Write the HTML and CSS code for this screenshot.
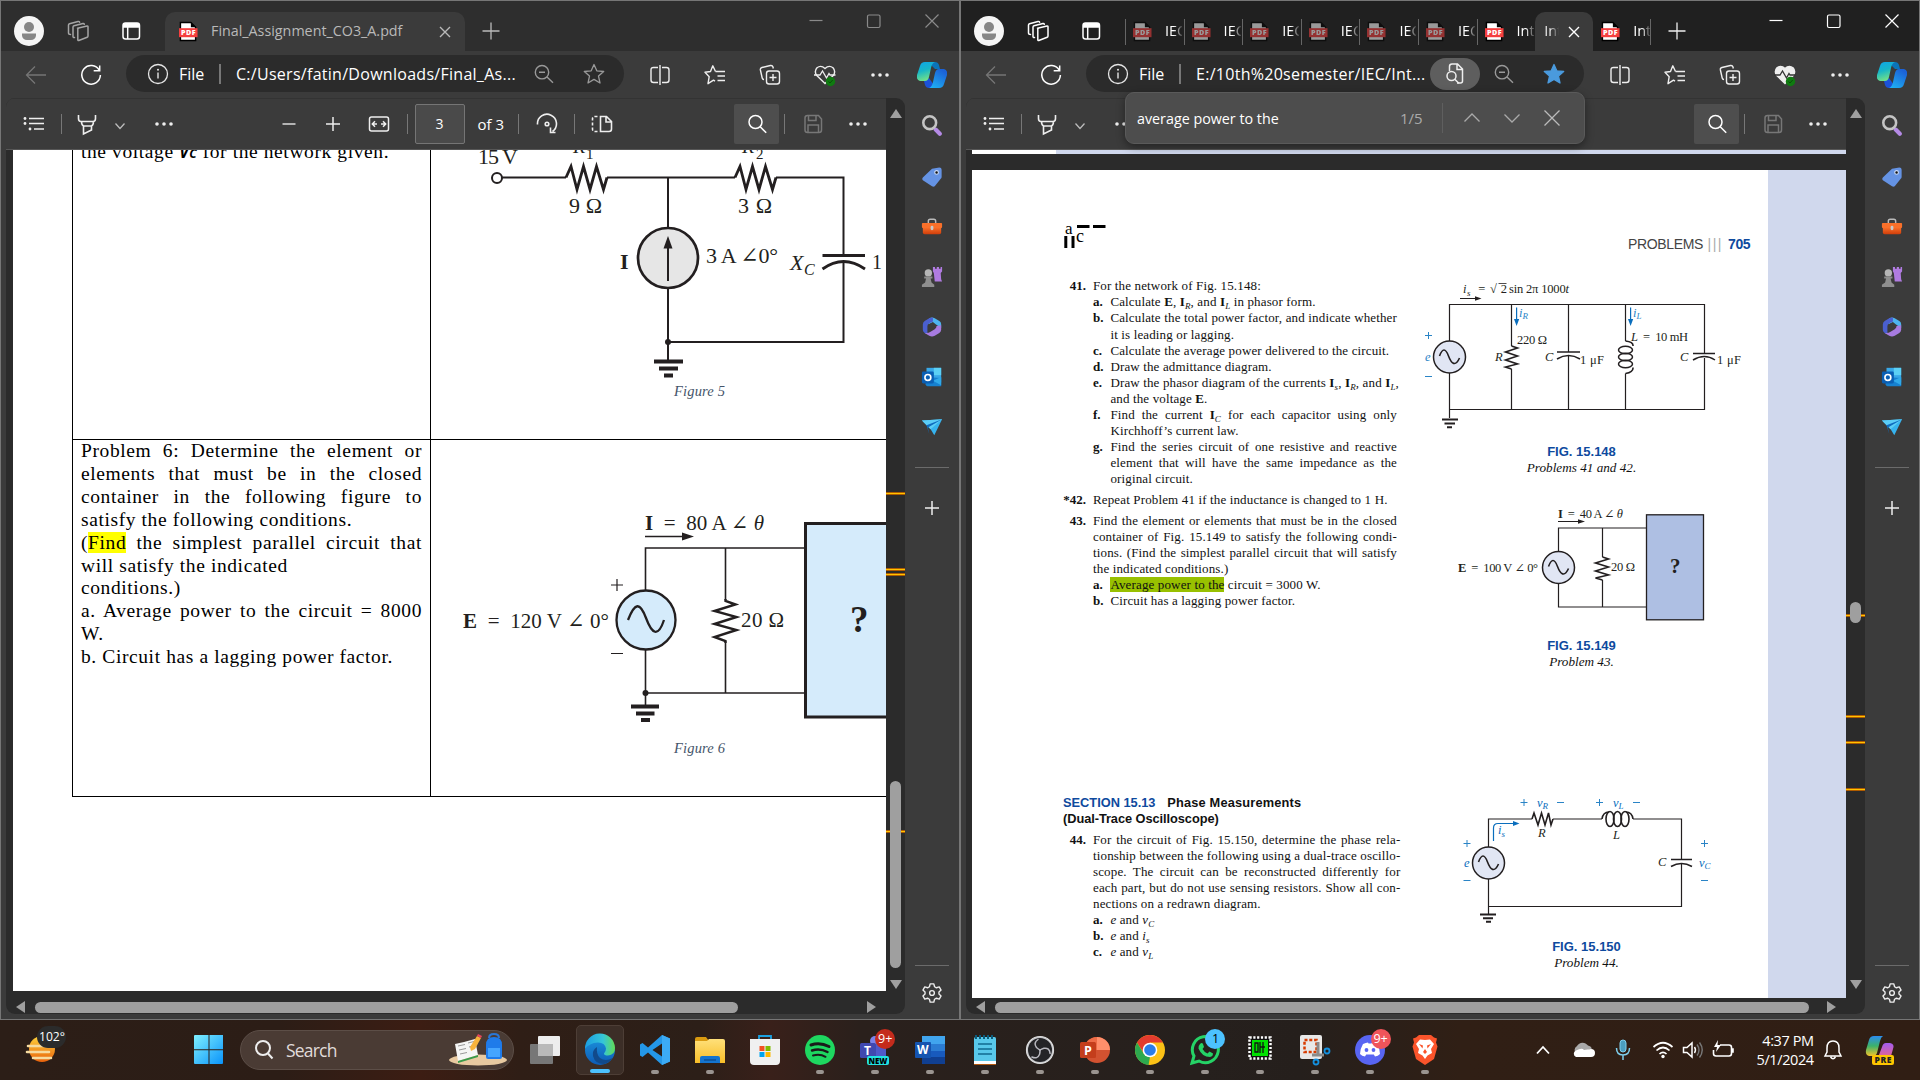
FILE: index.html
```html
<!DOCTYPE html>
<html lang="en">
<head>
<meta charset="utf-8">
<title>Desktop</title>
<link rel="stylesheet" href="styles.css">
</head>
<body>
<svg class="defs" width="0" height="0">
<defs>
<linearGradient id="gCop1" x1="0" y1="0" x2="0.3" y2="1"><stop offset="0" stop-color="#0fa5e9"/><stop offset=".5" stop-color="#17b5c8"/><stop offset="1" stop-color="#6fe08a"/></linearGradient>
<linearGradient id="gCop2" x1="0.6" y1="0" x2="0" y2="1"><stop offset="0" stop-color="#1b62d8"/><stop offset="1" stop-color="#1fb6f5"/></linearGradient>
<linearGradient id="gWin" x1="0" y1="0" x2="1" y2="1"><stop offset="0" stop-color="#7ff0ff"/><stop offset="1" stop-color="#0a93fa"/></linearGradient>
<linearGradient id="gSun" x1="0" y1="0" x2="0" y2="1"><stop offset="0" stop-color="#ffd23c"/><stop offset="1" stop-color="#e8620c"/></linearGradient>
<linearGradient id="gEdge1" x1="0" y1="0" x2="1" y2="0"><stop offset="0" stop-color="#1b9de2"/><stop offset=".6" stop-color="#35c6d8"/><stop offset="1" stop-color="#62dd55"/></linearGradient>
<linearGradient id="gEdge2" x1="0" y1="0" x2="0" y2="1"><stop offset="0" stop-color="#1d97e0"/><stop offset="1" stop-color="#0d5bb5"/></linearGradient>
<linearGradient id="gFold" x1="0" y1="0" x2="0" y2="1"><stop offset="0" stop-color="#ffe07a"/><stop offset="1" stop-color="#f8be28"/></linearGradient>
<linearGradient id="gBox" x1="0" y1="0" x2="0" y2="1"><stop offset="0" stop-color="#f9702a"/><stop offset="1" stop-color="#cf3d0a"/></linearGradient>
<linearGradient id="gPre" x1="0" y1="0" x2="0" y2="1"><stop offset="0" stop-color="#2c8cf0"/><stop offset=".5" stop-color="#3cb26a"/><stop offset="1" stop-color="#f2c32a"/></linearGradient>
<linearGradient id="gPre2" x1="0" y1="0" x2="0" y2="1"><stop offset="0" stop-color="#a45cf0"/><stop offset="1" stop-color="#f0667a"/></linearGradient>
</defs>
<symbol id="i-avatar" viewBox="0 0 30 30"><circle cx="15" cy="15" r="15" fill="#f5f5f5"/><circle cx="15" cy="11" r="5" fill="#868686"/><path d="M8 17.500h14v2a5 4.600 0 0 1-5 4.500h-4a5 4.600 0 0 1-5-4.500z" fill="#868686"/></symbol>
<symbol id="i-work" viewBox="0 0 24 24"><g fill="none" stroke="currentColor" stroke-width="1.500" stroke-linejoin="round" stroke-linecap="round"><path d="M11.500 9.300l9.500-2.300q1-.2 1 .8v9.200q0 1-.8 1.300l-8.400 3.200q-1 .3-1-.7v-10.500q0-.8.700-1z"/><path d="M8.500 18.500q-1.500.2-1.500-1V8q0-1 1-1.300l9-2.200q1.200-.1 1.300.8"/><path d="M4.500 15.500q-2 0-2-1.200V6q0-1 1-1.300l8.500-2.200q1.500-.3 1.600.8"/></g></symbol>
<symbol id="i-tabact" viewBox="0 0 24 24"><rect x="4" y="4" width="16.500" height="16" rx="2.500" fill="none" stroke="#fff" stroke-width="1.500"/><path d="M4 7q0-3 3-3h10.500q3 0 3 3v1.700H4z" fill="#fff"/><path d="M8.700 8v12" stroke="#fff" stroke-width="1.500"/></symbol>
<symbol id="i-pdf" viewBox="0 0 20 22"><path d="M1.500 1.500h11l5 5v14h-16z" fill="#fff" stroke="#000" stroke-width="1.500"/><path d="M12.500 1v5.500h5.500z" fill="#000"/><rect x="0" y="7.500" width="19.500" height="9.500" fill="#f53f3f"/><text x="2" y="15" font-family="Open Sans" font-weight="800" font-size="7.500" textLength="15.500" fill="#fff">PDF</text></symbol>
<symbol id="i-x" viewBox="0 0 24 24"><path d="M7 7l10 10M17 7L7 17" stroke="currentColor" stroke-width="1.400" fill="none"/></symbol>
<symbol id="i-plus" viewBox="0 0 24 24"><path d="M12 3.500v17M3.500 12h17" stroke="currentColor" stroke-width="1.300" fill="none"/></symbol>
<symbol id="i-min" viewBox="0 0 24 24"><path d="M5.500 11.500h13" stroke="currentColor" stroke-width="1.200"/></symbol>
<symbol id="i-max" viewBox="0 0 24 24"><rect x="5.500" y="6" width="12.500" height="12.500" rx="1.500" stroke="currentColor" stroke-width="1.200" fill="none"/></symbol>
<symbol id="i-wx" viewBox="0 0 24 24"><path d="M5.500 5.500l13 13M18.500 5.500l-13 13" stroke="currentColor" stroke-width="1.200"/></symbol>
<symbol id="i-back" viewBox="0 0 24 24"><path d="M22 12H2.500M11 3.500L2.500 12l8.500 8.500" fill="none" stroke="#757575" stroke-width="1.300"/></symbol>
<symbol id="i-ref" viewBox="0 0 24 24"><path d="M20.200 7.200A9.300 9.300 0 1 0 21.400 12M20.700 2.500v5.200h-6" fill="none" stroke="#fff" stroke-width="1.500"/></symbol>
<symbol id="i-info" viewBox="0 0 24 24"><circle cx="12" cy="12" r="9.500" fill="none" stroke="#e6e6e6" stroke-width="1.300"/><path d="M12 10.500v6" stroke="#e6e6e6" stroke-width="1.400"/><circle cx="12" cy="7.700" r="1" fill="#e6e6e6"/></symbol>
<symbol id="i-zoomout" viewBox="0 0 24 24"><g fill="none" stroke="#999" stroke-width="1.400"><circle cx="10" cy="10.200" r="6.700"/><path d="M7 10.200h6M15 15l6 5.800"/></g></symbol>
<symbol id="i-star" viewBox="0 0 24 24"><path d="M12 2.500l2.800 6.300 6.900.7-5.200 4.600 1.500 6.900-6-3.600-6 3.600 1.500-6.900-5.200-4.600 6.900-.7z" stroke="currentColor" stroke-width="1.300" stroke-linejoin="round"/></symbol>
<symbol id="i-split" viewBox="0 0 24 24"><g fill="none" stroke="#eee" stroke-width="1.400"><path d="M10 4.500H5.500q-2.500 0-2.500 2.500v10q0 2.500 2.500 2.500H10M14 4.500h4.500q2.500 0 2.500 2.500v10q0 2.500-2.500 2.500H14M12 2v20"/></g></symbol>
<symbol id="i-favs" viewBox="0 0 24 24"><g fill="none" stroke="#eee" stroke-width="1.400" stroke-linejoin="round"><path d="M12.500 8.500H22M14.500 13H22M14.500 17.500H22"/><path d="M12.500 8.500L9.800 2.800 7.500 8.500l-5.500.8 4.200 4.400-1.200 7 5.500-3.500 1.500 1"/></g></symbol>
<symbol id="i-coll" viewBox="0 0 24 24"><g fill="none" stroke="#eee" stroke-width="1.400" stroke-linejoin="round"><rect x="8.500" y="8" width="13" height="13" rx="2.500"/><path d="M15 11v7M11.500 14.500h7M6 16.500q-1.500 0-1.800-1.500L2.400 7q-.4-2 1.500-2.500l8.500-2q2-.4 2.600 1.500l.3 1.500"/></g></symbol>
<symbol id="i-heart" viewBox="0 0 24 24"><path d="M12 20.500L3.800 12.500q-3-4 .2-7.700 4-3.200 8 .8 4-4 8-.8 3.200 3.700.2 7.700z" fill="var(--heart,none)" stroke="#eee" stroke-width="1.400"/><path d="M1 12h6l2.500-4 4 7 2.500-4.500 1 1.500h5.500" fill="none" stroke="var(--pulse,#eee)" stroke-width="1.300"/><circle cx="17.500" cy="18.500" r="4.700" fill="#0f7b10"/><path d="M15.500 18.500l1.500 1.500 2.700-3" fill="none" stroke="#0a4d0a"/></symbol>
<symbol id="i-dots" viewBox="0 0 24 24"><g fill="#eee"><circle cx="5" cy="12" r="1.800"/><circle cx="12" cy="12" r="1.800"/><circle cx="19" cy="12" r="1.800"/></g></symbol>
<symbol id="i-copilot" viewBox="0 0 30 28"><path d="M11 1h7q3 0 4 3l1 4h-5z" fill="#0b74b8"/><path d="M19 27h-7q-3 0-4-3l-1-4 5-3z" fill="#1b52d8"/><path d="M8 1h10q-3 1-4 6l-2 9q-1 4-4 4H3q-4-1-3-6L3 5q1-4 5-4z" fill="url(#gCop1)"/><path d="M22 27H12q3-1 4-6l2-9q1-4 4-4h5q4 1 3 6l-3 9q-1 4-5 4z" fill="url(#gCop2)"/></symbol>
<symbol id="i-toc" viewBox="0 0 24 24"><g fill="#eee"><circle cx="3" cy="6.500" r="1.400"/><circle cx="3" cy="11.500" r="1.400"/><circle cx="8" cy="17" r="1.400"/></g><path d="M7 6.500h15M7 11.500h15M12 17h10" stroke="#eee" stroke-width="1.500"/></symbol>
<symbol id="i-hl" viewBox="0 0 24 24"><path d="M3.500 3v3.500q0 3 2.500 3h12q2.500 0 2.500-3V3M6.500 9.500q0 3.500 2 4.500v8l8-4v-4q2-1 2-4.500M8.500 14h8" fill="none" stroke="#eee" stroke-width="1.600"/></symbol>
<symbol id="i-chev" viewBox="0 0 24 24"><path d="M7.500 11.500l4.500 5 4.500-5" fill="none" stroke="#bbb" stroke-width="1.300"/></symbol>
<symbol id="i-minus" viewBox="0 0 24 24"><path d="M5.500 12h13" stroke="#ddd" stroke-width="1.600"/></symbol>
<symbol id="i-plus2" viewBox="0 0 24 24"><path d="M12 5v14M5 12h14" stroke="#eee" stroke-width="1.500"/></symbol>
<symbol id="i-fit" viewBox="0 0 24 24"><g fill="none" stroke="#eee" stroke-width="1.500"><rect x="2.500" y="5" width="19" height="14" rx="2"/><path d="M5.500 12H10M8 9.300L5.300 12 8 14.700M18.500 12H14M16 9.300l2.700 2.700L16 14.700"/></g></symbol>
<symbol id="i-rot" viewBox="0 0 24 24"><g fill="none" stroke="#eee" stroke-width="1.600"><path d="M2.500 12.500A9.500 9.500 0 1 1 17.500 19.500M15.500 15.500v5h5"/><circle cx="12" cy="12" r="1.800"/></g></symbol>
<symbol id="i-pv" viewBox="0 0 24 24"><g fill="none" stroke="#eee" stroke-width="1.600"><path d="M10.500 4.500h6l5 5v7.500q0 2.500-2.500 2.500h-8.500zM16 4.500V10h5.500"/><path d="M7.500 4.500H5q-2.500 0-2.500 2.500v10q0 2.500 2.500 2.500h2.500" stroke-dasharray="3 2"/></g></symbol>
<symbol id="i-search" viewBox="0 0 24 24"><g fill="none" stroke="#fff" stroke-width="1.500"><circle cx="10.500" cy="10" r="6.500"/><path d="M15.200 14.800l6 6"/></g></symbol>
<symbol id="i-save" viewBox="0 0 24 24"><g fill="none" stroke="#777" stroke-width="1.500"><path d="M4 6q0-2.500 2.500-2.500h11L20.500 7v11q0 2.500-2.500 2.500H6.500Q4 20.500 4 18z"/><path d="M7.500 3.500v5h7.500v-5M7 20v-7h10.500v7"/></g></symbol>
<symbol id="i-find" viewBox="0 0 24 24"><g fill="none" stroke="#eee" stroke-width="1.500"><path d="M6.500 9V4.500Q6.500 2 9 2h5.500l5 5v12q0 2-2 2H14M14 2v5.500h5.500"/><circle cx="8.500" cy="14" r="4.500"/><path d="M11.800 17.300l4 4"/></g></symbol>
<symbol id="i-up" viewBox="0 0 24 24"><path d="M4.500 15.500l7.500-7.500 7.500 7.500" fill="none" stroke="#aaa" stroke-width="1.300"/></symbol>
<symbol id="i-down" viewBox="0 0 24 24"><path d="M4.500 8.500l7.500 7.500 7.500-7.500" fill="none" stroke="#aaa" stroke-width="1.300"/></symbol>
<symbol id="i-fx" viewBox="0 0 24 24"><path d="M4.500 4.500l15 15M19.500 4.500l-15 15" fill="none" stroke="#bbb" stroke-width="1.300"/></symbol>
<symbol id="s-search" viewBox="0 0 24 24"><path d="M16 17l4.500 4.500" stroke="#b58ae6" stroke-width="4.500" stroke-linecap="round"/><circle cx="9.500" cy="9.500" r="7" fill="none" stroke="#c4c4c4" stroke-width="2.800"/></symbol>
<symbol id="s-tag" viewBox="0 0 24 24"><path d="M12 3l8-1.500q2.500 0 2.500 2.500v8q0 1-1 2l-6.500 8q-1.500 1-3 0l-10-6.500q-1.500-1.500 0-3z" fill="#6593e4"/><circle cx="17" cy="7" r="2" fill="#111" stroke="#cfe0ff" stroke-width="1.200"/></symbol>
<symbol id="s-box" viewBox="0 0 24 24"><path d="M8 8V5.500Q8 3.500 10 3.500h4q2 0 2 2V8" fill="none" stroke="#bbb" stroke-width="1.600"/><rect x="1" y="7.500" width="22" height="5.500" rx="1" fill="#f9702a"/><path d="M2 12.500h20V18q0 2-2 2H4q-2 0-2-2z" fill="url(#gBox)"/><rect x="10.500" y="10.500" width="3" height="5" rx="1.500" fill="#c9c9c9"/></symbol>
<symbol id="s-chess" viewBox="0 0 24 24"><path d="M13 1h2.300v2h1.900V1h2.400v2h1.800V1H23v5l-1.500 1.500.5 7 1 2.500h-8l-1-9.500L13 6z" fill="#b07be0"/><circle cx="8" cy="7.500" r="4" fill="#b5b5b5"/><path d="M3.500 11.500h9v2h-2l1 4.500 3 2.500V23H1v-2.500L4.500 18l1-4.500h-2z" fill="#8e8e8e"/></symbol>
<symbol id="s-365" viewBox="0 0 24 24"><path d="M9 2.500q3-2 6 0l5 3q2 1.200 2 3.500v4l-6-4-3-2.500L8 9z" fill="#4db3ee"/><path d="M9 2.500L4 5.500Q2 7 2 9v6q0 2.200 2 3.500l3 1.500V11q0-2 2-3l4-2V1.500q-2 0-4 1z" fill="#4a5fd0"/><path d="M22 10v5q0 2.200-2 3.500l-5 3q-3 1.800-6 0l-5-3q4 .5 6-1l5-3q2-1.200 2-3.500z" fill="#a77be0"/></symbol>
<symbol id="s-outlook" viewBox="0 0 24 24"><rect x="6" y="2" width="16" height="16" fill="#38a8e8"/><rect x="14" y="2" width="8" height="8" fill="#5bd0f5"/><path d="M5 12l17 1v9H7q-2 0-2-2z" fill="#1681d0"/><path d="M22 12v9l-9-5z" fill="#2fa9ea"/><rect x="1" y="6" width="13" height="13" rx="1.500" fill="#0a5fb4"/><circle cx="7.500" cy="12.500" r="3.200" fill="none" stroke="#fff" stroke-width="1.800"/></symbol>
<symbol id="s-send" viewBox="0 0 24 24"><path d="M1 5l22-1.500L14.500 21l-4-6.500z" fill="#36b3ee"/><path d="M23 3.500L10.500 14.500 1 5z" fill="#5bcdf7"/><path d="M6 10l17-6.500-15.500 9L9 20z" fill="#0f6cbf"/></symbol>
<symbol id="s-gear" viewBox="0 0 24 24"><g fill="none" stroke="#eee" stroke-width="1.500" stroke-linejoin="round"><path d="M10 2h4l.8 3.200 2 1.100 3.100-.9 2 3.400-2.300 2.200v2l2.300 2.200-2 3.400-3.100-.9-2 1.100L14 22h-4l-.8-3.200-2-1.100-3.100.9-2-3.400L4.400 13v-2L2.100 8.800l2-3.400 3.100.9 2-1.100z"/><circle cx="12" cy="12" r="2.600"/></g></symbol>
<symbol id="wave" viewBox="-16 -16 32 32"><path d="M-10-1C-7-9-4-9-1-1S6 10 10 1" fill="none" stroke="#231f20" stroke-width="1.600"/></symbol>
</svg>

<div class="desktop">
<section class="win inactive">
  <header class="tabs">
    <svg class="av"><use href="#i-avatar"/></svg><svg class="ic dim"><use href="#i-work"/></svg><svg class="ic"><use href="#i-tabact"/></svg>
    <div class="tab"><svg class="pdf"><use href="#i-pdf"/></svg><span>Final_Assignment_CO3_A.pdf</span><svg class="ic"><use href="#i-x"/></svg></div>
    <svg class="ic plus"><use href="#i-plus"/></svg>
    <div class="ctl"><svg class="ic"><use href="#i-min"/></svg><svg class="ic"><use href="#i-max"/></svg><svg class="ic"><use href="#i-wx"/></svg></div>
  </header>
  <nav class="addr">
    <svg class="ic"><use href="#i-back"/></svg><svg class="ic"><use href="#i-ref"/></svg>
    <div class="pill"><svg class="ic"><use href="#i-info"/></svg><span class="file">File</span><i class="bar"></i><span class="url">C:/Users/fatin/Downloads/Final_As...</span><b></b><svg class="ic"><use href="#i-zoomout"/></svg><svg class="ic star"><use href="#i-star"/></svg></div>
    <svg class="ic"><use href="#i-split"/></svg><svg class="ic"><use href="#i-favs"/></svg><svg class="ic"><use href="#i-coll"/></svg><svg class="ic"><use href="#i-heart"/></svg><svg class="ic"><use href="#i-dots"/></svg><svg class="cop"><use href="#i-copilot"/></svg>
  </nav>
  <div class="body">
    <div class="viewer">
      <div class="main">
        <div class="tools">
          <svg class="ic"><use href="#i-toc"/></svg><i class="bar"></i><svg class="ic"><use href="#i-hl"/></svg><svg class="ic"><use href="#i-chev"/></svg><svg class="ic"><use href="#i-dots"/></svg><svg class="ic"><use href="#i-minus"/></svg><svg class="ic"><use href="#i-plus2"/></svg><svg class="ic"><use href="#i-fit"/></svg><i class="bar"></i><div class="pageno">3</div><span>of 3</span><i class="bar"></i><svg class="ic"><use href="#i-rot"/></svg><i class="bar"></i><svg class="ic"><use href="#i-pv"/></svg><div class="sbtn"><svg class="ic"><use href="#i-search"/></svg></div><i class="bar"></i><svg class="ic"><use href="#i-save"/></svg><svg class="ic"><use href="#i-dots"/></svg>
        </div>
        <div class="doc">
          <div class="page1">
            <div class="cell c-top"><p><span>the voltage <em class="vc">V<small>C</small></em> for the network given.</span></p></div>
            <div class="cell">
              <svg width="455" height="289" viewBox="431 150 455 289" class="fig">
                <g fill="none" stroke="#231f20" stroke-width="2">
                  <circle cx="497" cy="178" r="5"/>
                  <path d="M502 177.500h64M607 177.500H735M776 177.500h67.500v78M843.500 262v80H668M668 178v50M668 288v72"/>
                  <path d="M566 177.500l5-11 6 23 6.500-23 6.500 23 6.500-23 7 23 3.500-12M735 177.500l5-11 6 23 6.500-23 6.500 23 6.500-23 7 23 3.500-12M822.500 255.500H865M822.500 269q21-15 42.500 0" stroke-width="2.800"/>
                  <circle cx="668" cy="258" r="30" fill="#e6e6e6" stroke-width="2.700"/><path d="M668 281v-34"/>
                  <path d="M654 361.500h29M659 368.500h19M664 375.500h9" stroke-width="4"/>
                </g>
                <path d="M668 236l4.500 12.500h-9z" fill="#231f20"/><circle cx="668" cy="342" r="3" fill="#231f20"/>
                <g fill="#231f20" font-size="22">
                  <text x="478" y="164" textLength="40">15 V</text><text x="573" y="153" font-style="italic" font-size="20">R</text><text x="586" y="159" font-size="15">1</text><text x="742" y="153" font-style="italic" font-size="20">R</text><text x="756" y="159" font-size="15">2</text>
                  <text x="569" y="213" textLength="33">9 Ω</text><text x="738" y="213" textLength="34">3 Ω</text><text x="620" y="269" font-weight="bold">I</text><text x="706" y="263" textLength="72">3 A ∠0°</text><text x="790" y="270" font-style="italic">X</text><text x="804" y="275" font-style="italic" font-size="16">C</text><text x="872" y="269" font-size="20">1</text>
                </g>
                <text x="674" y="396" class="cap" textLength="51">Figure 5</text>
              </svg>
            </div>
            <div class="cell">
              <p><span class="j">Problem 6: Determine the element or</span><span class="j">elements that must be in the closed</span><span class="j">container in the following figure to</span><span>satisfy the following conditions.</span><span class="j">(<mark>Find</mark> the simplest parallel circuit that</span><span>will satisfy the indicated</span><span>conditions.)</span><span class="j">a. Average power to the circuit = 8000</span><span>W.</span><span>b. Circuit has a lagging power factor.</span></p>
            </div>
            <div class="cell">
              <svg width="455" height="355" viewBox="431 440 455 355" class="fig">
                <rect x="805.500" y="523.500" width="120" height="193.500" fill="#d5ebfb" stroke="#231f20" stroke-width="3"/>
                <g fill="none" stroke="#231f20" stroke-width="1.600">
                  <path d="M645 536.500h38M804 548H645.500v145H804M725.500 548v52M725.500 641v52M645.500 693v12"/>
                  <path d="M725.500 599v2l10 3.500-21 6.500 22 6-22 7 22 6-22 7 11 4v2" stroke-width="2.400"/>
                  <circle cx="646" cy="620" r="29.500" fill="#d5ebfb" stroke-width="2.300"/>
                  <path d="M628 620c7-18 12-18 18-2s12 20 18 2" stroke-width="2.300"/>
                  <path d="M631 706.500h28M636 713.500h18.500M641 720h9" stroke-width="4"/>
                  <path d="M611 585h12M617 579v12M611 653.500h12" stroke-width="1.200"/>
                </g>
                <path d="M694 536.500l-12 4v-8z" fill="#231f20"/><circle cx="645.500" cy="693" r="3" fill="#231f20"/>
                <g fill="#231f20" font-size="21">
                  <text x="645" y="530" textLength="119" xml:space="preserve"><tspan font-weight="bold">I</tspan>  =  80 A ∠ <tspan font-style="italic">θ</tspan></text>
                  <text x="463" y="628" textLength="146" xml:space="preserve"><tspan font-weight="bold">E</tspan>  =  120 V ∠ 0°</text>
                  <text x="741" y="627" textLength="43">20 Ω</text><text x="850" y="632" font-size="37" font-weight="bold">?</text>
                </g>
                <text x="674" y="753" class="cap" textLength="51">Figure 6</text>
              </svg>
            </div>
          </div>
        </div>
        <div class="hscroll"><i class="al"></i><i class="thumb"></i><i class="ar"></i></div>
      </div>
      <div class="vscroll"><i class="au"></i><i class="mk" style="top:394px"></i><i class="mk" style="top:470px"></i><i class="mk" style="top:475px"></i><i class="mk" style="top:732px"></i><i class="vt" style="top:683px;height:187px"></i><i class="ad"></i></div>
    </div>
    <aside class="side">
      <svg><use href="#s-search"/></svg><svg><use href="#s-tag"/></svg><svg><use href="#s-box"/></svg><svg><use href="#s-chess"/></svg><svg><use href="#s-365"/></svg><svg><use href="#s-outlook"/></svg><svg><use href="#s-send"/></svg><hr><svg class="sp"><use href="#i-plus2"/></svg><hr class="last"><svg class="gear"><use href="#s-gear"/></svg>
    </aside>
  </div>
</section>

<section class="win active">
  <header class="tabs">
    <svg class="av"><use href="#i-avatar"/></svg><svg class="ic"><use href="#i-work"/></svg><svg class="ic"><use href="#i-tabact"/></svg>
    <div class="strip">
      <div class="mt dimtab"><svg class="pdf"><use href="#i-pdf"/></svg><span>IEC</span></div><div class="mt dimtab"><svg class="pdf"><use href="#i-pdf"/></svg><span>IEC</span></div><div class="mt dimtab"><svg class="pdf"><use href="#i-pdf"/></svg><span>IEC</span></div><div class="mt dimtab"><svg class="pdf"><use href="#i-pdf"/></svg><span>IEC</span></div><div class="mt dimtab"><svg class="pdf"><use href="#i-pdf"/></svg><span>IEC</span></div><div class="mt dimtab"><svg class="pdf"><use href="#i-pdf"/></svg><span>IEC</span></div>
      <div class="mt"><svg class="pdf"><use href="#i-pdf"/></svg><span>Int</span></div>
      <div class="tab"><span>Int</span><svg class="ic"><use href="#i-x"/></svg></div>
      <div class="mt end"><svg class="pdf"><use href="#i-pdf"/></svg><span>Int</span></div>
      <svg class="ic plus"><use href="#i-plus"/></svg>
    </div>
    <div class="ctl"><svg class="ic"><use href="#i-min"/></svg><svg class="ic"><use href="#i-max"/></svg><svg class="ic"><use href="#i-wx"/></svg></div>
  </header>
  <nav class="addr">
    <svg class="ic"><use href="#i-back"/></svg><svg class="ic"><use href="#i-ref"/></svg>
    <div class="pill"><svg class="ic"><use href="#i-info"/></svg><span class="file">File</span><i class="bar"></i><span class="url">E:/10th%20semester/IEC/Int...</span><b class="on"><svg class="ic"><use href="#i-find"/></svg></b><svg class="ic"><use href="#i-zoomout"/></svg><svg class="ic star"><use href="#i-star"/></svg></div>
    <svg class="ic"><use href="#i-split"/></svg><svg class="ic"><use href="#i-favs"/></svg><svg class="ic"><use href="#i-coll"/></svg><svg class="ic"><use href="#i-heart"/></svg><svg class="ic"><use href="#i-dots"/></svg><svg class="cop"><use href="#i-copilot"/></svg>
  </nav>
  <div class="findbar"><span>average power to the</span><span class="cnt">1/5</span><i class="bar"></i><svg class="ic"><use href="#i-up"/></svg><svg class="ic"><use href="#i-down"/></svg><svg class="ic"><use href="#i-fx"/></svg></div>
  <div class="body">
    <div class="viewer">
      <div class="main">
        <div class="tools">
          <svg class="ic"><use href="#i-toc"/></svg><i class="bar"></i><svg class="ic"><use href="#i-hl"/></svg><svg class="ic"><use href="#i-chev"/></svg><svg class="ic"><use href="#i-dots"/></svg><em></em><em></em><em></em><em></em><em></em><em></em><em></em><em></em><em></em><em class="edge"></em><div class="sbtn"><svg class="ic"><use href="#i-search"/></svg></div><i class="bar"></i><svg class="ic"><use href="#i-save"/></svg><svg class="ic"><use href="#i-dots"/></svg>
        </div>
        <div class="doc">
          <div class="prev"></div>
          <div class="page2">
            <div class="txt">
              <svg class="mark" width="44" height="26" viewBox="1062 223 44 26"><path d="M1077 226.500h12.500M1093 226.500h12.500" stroke="#000" stroke-width="3"/><path d="M1065.800 236v12M1073 236v12" stroke="#000" stroke-width="3"/><text x="1065" y="234" font-size="17">a</text><text x="1076" y="242" font-size="18">c</text></svg>
              <div class="q"><b>41.</b><p>For the network of Fig. 15.148:</p></div>
              <div class="a"><b>a.</b><p>Calculate <b>E</b>, <b>I</b><sub>R</sub>, and <b>I</b><sub>L</sub> in phasor form.</p></div>
              <div class="a"><b>b.</b><p><span class="j">Calculate the total power factor, and indicate whether</span><span>it is leading or lagging.</span></p></div>
              <div class="a"><b>c.</b><p>Calculate the average power delivered to the circuit.</p></div>
              <div class="a"><b>d.</b><p>Draw the admittance diagram.</p></div>
              <div class="a"><b>e.</b><p><span class="j">Draw the phasor diagram of the currents <b>I</b><sub>s</sub>, <b>I</b><sub>R</sub>, and <b>I</b><sub>L</sub>,</span><span>and the voltage <b>E</b>.</span></p></div>
              <div class="a"><b>f.</b><p><span class="j">Find the current <b>I</b><sub>C</sub> for each capacitor using only</span><span>Kirchhoff’s current law.</span></p></div>
              <div class="a"><b>g.</b><p><span class="j">Find the series circuit of one resistive and reactive</span><span class="j">element that will have the same impedance as the</span><span>original circuit.</span></p></div>
              <div class="q g4"><b>*42.</b><p>Repeat Problem 41 if the inductance is changed to 1 H.</p></div>
              <div class="q g5"><b>43.</b><p><span class="j">Find the element or elements that must be in the closed</span><span class="j">container of Fig. 15.149 to satisfy the following condi-</span><span class="j">tions. (Find the simplest parallel circuit that will satisfy</span><span>the indicated conditions.)</span></p></div>
              <div class="a"><b>a.</b><p><mark>Average power to the</mark> circuit = 3000 W.</p></div>
              <div class="a"><b>b.</b><p>Circuit has a lagging power factor.</p></div>
              <h3><span>SECTION 15.13</span> Phase Measurements<br><em>(Dual-Trace Oscilloscope)</em></h3>
              <div class="q"><b>44.</b><p><span class="j">For the circuit of Fig. 15.150, determine the phase rela-</span><span class="j">tionship between the following using a dual-trace oscillo-</span><span class="j">scope. The circuit can be reconstructed differently for</span><span class="j">each part, but do not use sensing resistors. Show all con-</span><span>nections on a redrawn diagram.</span></p></div>
              <div class="a s"><b>a.</b><p><i>e</i> and <i>v</i><sub>C</sub></p></div>
              <div class="a s"><b>b.</b><p><i>e</i> and <i>i</i><sub>s</sub></p></div>
              <div class="a s"><b>c.</b><p><i>e</i> and <i>v</i><sub>L</sub></p></div>
            </div>
            <div class="figs">
              <div class="ph">PROBLEMS <span>|||</span><b>705</b></div>
              <svg class="fig" width="368" height="170" viewBox="1400 270 368 170">
                <g fill="none" stroke="#231f20" stroke-width="1.200">
                  <path d="M1460 298.500h16M1449.500 418V304.500h255v49M1704.500 358v51.500h-255M1511.500 304.500V346M1511.500 369v40.500M1568.500 304.500V352M1568.500 356v53.500M1625.500 304.500V341M1625.500 373.500v36"/>
                  <path d="M1511.500 346l6 2-12 4 12 4-12 4 12 4-12 3 6 2M1625.500 341q8 1 7.500 5M1625.500 373.500q8-1 7.500-6" stroke-width="1.600"/>
                  <g stroke-width="1.500"><ellipse cx="1625.500" cy="350" rx="7" ry="3.800"/><ellipse cx="1625.500" cy="357" rx="7" ry="3.800"/><ellipse cx="1625.500" cy="364" rx="7" ry="3.800"/></g>
                  <circle cx="1449.500" cy="357" r="16" fill="#e1e6f4" stroke-width="1.500"/>
                  <path d="M1557 352h23M1557 359q11.500-7 23 0M1693 353.500h22M1693 360q11.500-7 22 0" stroke-width="1.500"/>
                  <path d="M1442 419.500h16M1444.500 423.500h10.500M1447 427.200h5" stroke-width="2"/>
                </g>
                <use href="#wave" x="1433.500" y="341" width="32" height="32"/>
                <path d="M1481.500 298.500l-6.500 2.200v-4.400z" fill="#231f20"/>
                <g fill="#0a6ebd"><path d="M1516 307.500h1.200V319h2l-2.600 7-2.600-7h2zM1630 307.500h1.200V319h2l-2.600 7-2.600-7h2z"/></g>
                <path d="M1425 335.500h7M1428.500 332v7M1425 376.500h7" stroke="#2a84c6" fill="none"/>
                <g fill="#231f20" font-size="12.500">
                  <text x="1463" y="293" font-style="italic">i</text><text x="1467" y="296" font-size="9" font-style="italic">s</text><text x="1475" y="293" xml:space="preserve"> =</text><text x="1490" y="293" textLength="17">√2</text><text x="1509" y="293" textLength="60" xml:space="preserve">sin 2π 1000<tspan font-style="italic">t</tspan></text><path d="M1498.500 283.500h8" stroke="#231f20" stroke-width=".8"/>
                  <text x="1517" y="344" textLength="30">220 Ω</text><text x="1495" y="361" font-style="italic">R</text><text x="1545" y="361" font-style="italic">C</text><text x="1580" y="364" textLength="24">1 μF</text><text x="1631" y="341" textLength="57" xml:space="preserve"><tspan font-style="italic">L</tspan>  =  10 mH</text><text x="1680" y="361" font-style="italic">C</text><text x="1717" y="364" textLength="24">1 μF</text>
                </g>
                <g fill="#2a84c6" font-size="12.500" font-style="italic"><text x="1425" y="361">e</text><text x="1519" y="317">i<tspan font-size="9" dy="2">R</tspan></text><text x="1633" y="317">i<tspan font-size="9" dy="2">L</tspan></text></g>
              </svg>
              <div class="fc"><b>FIG. 15.148</b><i>Problems 41 and 42.</i></div>
              <svg class="fig" width="368" height="135" viewBox="1400 500 368 135">
                <rect x="1646.500" y="514.800" width="57" height="105" fill="#aebfe3" stroke="#231f20" stroke-width="1.300"/>
                <g fill="none" stroke="#231f20" stroke-width="1.200"><path d="M1558 521.500h21M1646 528h-87.500v79h87.500M1602.500 528v29M1602.500 580v27"/><path d="M1602.500 557l6 2-13 4 13 4-13 4 13 4-13 3 7 2" stroke-width="1.600"/><circle cx="1558.500" cy="567.500" r="16" fill="#e1e6f4" stroke-width="1.500"/></g>
                <use href="#wave" x="1542.500" y="551.500" width="32" height="32"/>
                <path d="M1585 521.500l-7 2.200v-4.400z" fill="#231f20"/>
                <g fill="#231f20" font-size="12.500"><text x="1558" y="518" textLength="65" xml:space="preserve"><tspan font-weight="bold">I</tspan>  =  40 A ∠ <tspan font-style="italic">θ</tspan></text><text x="1458" y="572" textLength="80" xml:space="preserve"><tspan font-weight="bold">E</tspan>  =  100 V ∠ 0°</text><text x="1611" y="571" textLength="24">20 Ω</text><text x="1670" y="573" font-size="21" font-weight="bold">?</text></g>
              </svg>
              <div class="fc f2"><b>FIG. 15.149</b><i>Problem 43.</i></div>
              <svg class="fig last" width="368" height="140" viewBox="1400 790 368 140">
                <g fill="none" stroke="#231f20" stroke-width="1.200">
                  <path d="M1488.500 914V819H1532M1553 819h49M1633 819h48.500v40M1681.500 864v42.500h-193"/>
                  <g stroke-width="1.600"><path d="M1532 819l2-6 4 12 3.500-12 3.500 12 3.500-12 2.500 12 2-6M1602 819q1-7 7-7M1633 819q-1-7-7-7"/><ellipse cx="1610" cy="819" rx="4" ry="7.500"/><ellipse cx="1617.500" cy="819" rx="4" ry="7.500"/><ellipse cx="1625" cy="819" rx="4" ry="7.500"/></g>
                  <circle cx="1488.500" cy="863" r="16" fill="#e1e6f4" stroke-width="1.500"/>
                  <path d="M1671 859.500h21M1671 866.500q10.500-6 21 0" stroke-width="1.500"/><path d="M1480 914.500h16M1483 918.200h10M1486 921.800h5" stroke-width="2"/>
                </g>
                <use href="#wave" x="1472.500" y="847" width="32" height="32"/>
                <path d="M1493.500 841v-13q0-4.500 4.500-4.500h16" fill="none" stroke="#0a6ebd" stroke-width="1.200"/><path d="M1519.500 823.500l-6.500 2.400v-4.800z" fill="#0a6ebd"/>
                <path d="M1520.500 802.500h7M1524 799v7M1557 802.500h7M1596 802.500h7M1599.500 799v7M1633 802.500h7M1463.500 843.500h7M1467 840v7M1463.500 880.500h7M1701 843.500h7M1704.500 840v7M1701 880.500h7" stroke="#2a84c6" fill="none"/>
                <g fill="#231f20" font-size="12.500" font-style="italic"><text x="1538" y="837">R</text><text x="1613" y="839">L</text><text x="1658" y="866">C</text></g>
                <g fill="#0a6ebd" font-size="12.500" font-style="italic"><text x="1464" y="867">e</text><text x="1498" y="834">i<tspan font-size="9" dy="3">s</tspan></text><text x="1537" y="807">v<tspan font-size="9" dy="2">R</tspan></text><text x="1613" y="807">v<tspan font-size="9" dy="2">L</tspan></text><text x="1699" y="867">v<tspan font-size="9" dy="2">C</tspan></text></g>
              </svg>
              <div class="fc f3"><b>FIG. 15.150</b><i>Problem 44.</i></div>
            </div>
          </div>
        </div>
        <div class="hscroll"><i class="al"></i><i class="thumb"></i><i class="ar"></i></div>
      </div>
      <div class="vscroll"><i class="au"></i><i class="mk" style="top:516px"></i><i class="mk" style="top:617px"></i><i class="mk" style="top:643px"></i><i class="mk" style="top:690px"></i><i class="vt" style="top:504px;height:21px"></i><i class="ad"></i></div>
    </div>
    <aside class="side">
      <svg><use href="#s-search"/></svg><svg><use href="#s-tag"/></svg><svg><use href="#s-box"/></svg><svg><use href="#s-chess"/></svg><svg><use href="#s-365"/></svg><svg><use href="#s-outlook"/></svg><svg><use href="#s-send"/></svg><hr><svg class="sp"><use href="#i-plus2"/></svg><hr class="last"><svg class="gear"><use href="#s-gear"/></svg>
    </aside>
  </div>
</section>

<footer class="taskbar">
  <div class="weather"><svg width="44" height="46" viewBox="0 0 44 46"><circle cx="17" cy="26" r="13" fill="url(#gSun)"/><path d="M3 23h20M2 29h22M8 35h18" stroke="#f6dba0" stroke-width="2.600" stroke-linecap="round"/><rect x="12" y="3" width="29" height="22" rx="11" fill="#2b2b2b"/><text x="14" y="18" font-family="Open Sans" font-size="13.500" fill="#fff" textLength="26" lengthAdjust="spacingAndGlyphs">102°</text></svg></div>
  <svg class="start" width="30" height="30" viewBox="0 0 30 30"><path d="M1 0h13.500v14.300H0V1q0-1 1-1zM15.500 0H29v14.300H15.500zM0 15.300h14.500V29H1q-1 0-1-1zM15.500 15.300H29V28q0 1-1 1H15.500z" fill="url(#gWin)"/></svg>
  <div class="search"><svg width="22" height="24" viewBox="0 0 22 24"><circle cx="9" cy="10" r="7" fill="none" stroke="#eee" stroke-width="2"/><path d="M14 15.500l4.500 5" stroke="#eee" stroke-width="2"/></svg><span>Search</span>
    <svg width="58" height="34" viewBox="0 0 58 34"><ellipse cx="29" cy="27" rx="29" ry="5.500" fill="#e8c9a0"/><path d="M6 11l9-2 11-3 3 16-10 3-10 3z" fill="#f5f5f5"/><path d="M9 28l20-6v2L9 30z" fill="#3a9a4a"/><path d="M9 13l7-1.500M10 17l7-1.500M11 21l7-1.500M19 10l6-1.500M20 14l6-1.500" stroke="#999"/><path d="M21 14l7-11 4 2-6 11-4 2z" fill="#f8b33c"/><path d="M28 3l1-2 4 2-1 2z" fill="#e6455a"/><path d="M40 5q0-4 5-4t5 4" fill="none" stroke="#2a77d6" stroke-width="2"/><path d="M37 12q0-8 8-8t8 8v12q0 2-2 2H39q-2 0-2-2z" fill="#1f7bea"/><path d="M39 15h12v9H39z" fill="#45a5ff"/></svg>
  </div>
  <svg class="tv" width="30" height="28" viewBox="0 0 30 28"><rect y="8" width="23" height="20" rx="1" fill="#777"/><rect x="8" width="22" height="20" rx="1" fill="#ededed"/><path d="M8 8h15v12H8z" fill="#b9b9b9"/></svg>
  <div class="edge-btn"><svg width="30" height="30" viewBox="0 0 30 30"><circle cx="15" cy="15" r="15" fill="url(#gEdge2)"/><path d="M0 14A15 15 0 0 1 30 13q0 7-7 7.500-4 0-4-2 2-2 2-5-1-6-8-6Q4 8 0 14z" fill="url(#gEdge1)"/><path d="M12 12q-5 3-4 9 2 8 11 8 5-1 8.500-6-7 4-12.500 0-4-4-3-11z" fill="#114a8b"/></svg></div>
  <div class="apps">
    <div class="app"><svg viewBox="0 0 30 30"><path d="M22 0l8 3.500v23L22 30 8 17.500 2.500 22 0 20.500v-11L2.500 8 8 12.500zM22 8.500L12.500 15 22 21.500z" fill="#2497e8" fill-rule="evenodd"/><path d="M22 0l8 3.500v23L22 30z" fill="#3cabf5"/></svg></div>
    <div class="app"><svg viewBox="0 0 30 30"><path d="M0 4q0-2 2-2h9l3 4h-14z" fill="#d99a10"/><path d="M0 6h12l2-2h14q2 0 2 2v22H0z" fill="url(#gFold)"/><path d="M5 28v-5q0-2 2-2h16q2 0 2 2v5z" fill="#1474cf"/><path d="M9 25h12" stroke="#0d4f95" stroke-width="1.500"/></svg></div>
    <div class="app off"><svg viewBox="0 0 30 30"><path d="M9 5V1h12v4" fill="none" stroke="#1ba1e2" stroke-width="1.800"/><path d="M0 4h30v22q0 4-4 4H4q-4 0-4-4z" fill="#f0f0f0"/><path d="M9.500 11h5v5h-5z" fill="#f25022"/><path d="M15.500 11h5v5h-5z" fill="#7fba00"/><path d="M9.500 17h5v5h-5z" fill="#00a4ef"/><path d="M15.500 17h5v5h-5z" fill="#ffb900"/></svg></div>
    <div class="app"><svg viewBox="0 0 30 30"><circle cx="15" cy="15" r="15" fill="#1ed760"/><g fill="none" stroke="#1a1a1a" stroke-linecap="round"><path d="M6 10q9-3 18 1.500" stroke-width="3"/><path d="M7 15.500q8-2.500 15.500 1.500" stroke-width="2.500"/><path d="M8 20.500q7-2 12.500 1.300" stroke-width="2"/></g></svg></div>
    <div class="app"><svg viewBox="0 0 30 30"><circle cx="15" cy="6" r="5" fill="#7b83eb"/><rect x="11" y="9" width="15" height="16" rx="2" fill="#5059c9"/><rect x="0" y="8" width="16" height="15" rx="1.500" fill="#4048b0"/><text x="4" y="20" font-family="Open Sans" font-weight="700" font-size="12" fill="#fff">T</text><rect x="7" y="21" width="22" height="9" rx="2" fill="#22e3e3"/><text x="8.500" y="28.500" font-family="Open Sans" font-weight="800" font-size="8" fill="#000" textLength="19" lengthAdjust="spacingAndGlyphs">NEW</text></svg><em class="bd red">9+</em></div>
    <div class="app"><svg viewBox="0 0 30 30"><rect x="7" y="1" width="23" height="28" rx="1" fill="#185abd"/><path d="M7 1h23v8H7z" fill="#41a5ee"/><path d="M7 9h23v7H7z" fill="#2b7cd3"/><path d="M7 22h23v7H7z" fill="#103f91"/><rect y="7" width="16" height="16" rx="1" fill="#1554b0"/><text x="2" y="19" font-family="Open Sans" font-weight="700" font-size="12" fill="#fff">W</text></svg></div>
    <div class="app"><svg viewBox="0 0 30 30"><rect x="4" y="2" width="22" height="27" rx="1.500" fill="#58c8ea"/><path d="M4 26h22v3H4z" fill="#fff"/><path d="M4 29h22v1H4z" fill="#b0560e"/><path d="M6 0v4M10 0v4M14 0v4M18 0v4M22 0v4" stroke="#0b5c7c" stroke-width="2"/><path d="M8 9h14M8 14h14M8 19h14" stroke="#106a90" stroke-width="1.600"/></svg></div>
    <div class="app"><svg viewBox="0 0 30 30"><circle cx="15" cy="15" r="13.500" fill="#c4c4c8" stroke="#ddd" stroke-width="1.200"/><circle cx="15" cy="15" r="12" fill="#242427"/><g fill="none" stroke="#b9b9c0" stroke-width="1.500" stroke-linecap="round"><path id="blade" d="M13 4.500q-5 3.500-1.500 8 2 1.800 3.500 2.500"/><use href="#blade" transform="rotate(120 15 15)"/><use href="#blade" transform="rotate(240 15 15)"/></g></svg></div>
    <div class="app"><svg viewBox="0 0 30 30"><circle cx="17" cy="15" r="13" fill="#d35230"/><path d="M17 2a13 13 0 0 1 13 13H17z" fill="#ff8f6b"/><path d="M17 2v13H4A13 13 0 0 1 17 2z" fill="#ed6c47"/><rect x="0" y="7" width="16" height="16" rx="1.500" fill="#c43e1c"/><text x="4" y="19.500" font-family="Open Sans" font-weight="700" font-size="12.500" fill="#fff">P</text></svg></div>
    <div class="app"><svg viewBox="0 0 30 30"><circle cx="15" cy="15" r="15" fill="#fbc116"/><path d="M2 7.500A15 15 0 0 1 28 7.500H15L9 18.500z" fill="#e33b2e"/><path d="M2 7.500L8.600 18.600 15 22l-1.500 8A15 15 0 0 1 2 7.500z" fill="#2da94f"/><circle cx="15" cy="15" r="7.300" fill="#fff"/><circle cx="15" cy="15" r="5.800" fill="#2a7de9"/></svg></div>
    <div class="app"><svg viewBox="0 0 30 30"><path d="M2 28l2-7A13 13 0 1 1 9 26z" fill="none" stroke="#25d366" stroke-width="3"/><path d="M10 9q2-2 3 0l1 3-1.500 2q2 3.500 5 4.500l2-2 3.500 2q0 3-3 3.500-8 0-11.500-8.500-.3-3 1.500-4.500z" fill="#25d366"/></svg><em class="bd blue">1</em></div>
    <div class="app"><svg viewBox="0 0 30 30"><rect x="4.500" y="2.500" width="21" height="21" fill="#111" stroke="#fff" stroke-width="2.500" stroke-dasharray="2.200 1.600"/><rect x="7" y="5" width="16" height="16" fill="#00e000"/><path d="M10 8h3v9h-3zM15 7v11M18 7v11M15 12h5" stroke="#111" fill="none" stroke-width="1.300"/></svg></div>
    <div class="app"><svg viewBox="0 0 30 30"><rect x="0" y="0" width="22" height="24" rx="2" fill="#e8e8e8"/><rect x="4.500" y="5" width="12" height="12" fill="none" stroke="#d83b01" stroke-width="2.500" stroke-dasharray="3 1.800"/><path d="M18 7v14M12 20h12" stroke="#8a8a8a" stroke-width="3"/><circle cx="27" cy="16" r="2.500" fill="none" stroke="#1490df" stroke-width="1.800"/><circle cx="16" cy="27" r="2.500" fill="none" stroke="#1490df" stroke-width="1.800"/></svg></div>
    <div class="app"><svg viewBox="0 0 30 30"><circle cx="15" cy="15" r="15" fill="#5865f2"/><path d="M8 9q3-1.500 5-1.500l.5 1h3l.5-1q2 0 5 1.500 3 5 3 10-2 2-5 2.500l-1.200-2h-7.600L10 21.500Q7 21 5 19q0-5 3-10z" fill="#fff"/><circle cx="11.500" cy="15" r="1.900" fill="#5865f2"/><circle cx="18.500" cy="15" r="1.900" fill="#5865f2"/></svg><em class="bd coral">9+</em></div>
    <div class="app"><svg viewBox="0 0 30 30"><path d="M9 0h12l3 2.500 3 1-1 4 1.500 4L24 24l-9 6-9-6L2.500 11.500 4 7.500 3 3.500l3-1z" fill="#fb542b"/><path d="M15 5l5-.5 4 4.500-3 5 1 4-4.500 2.500L15 24l-2.500-3.500L8 18l1-4-3-5 4-4.500z" fill="#fff"/><path d="M9 9l4 1.500-.5 3zM21 9l-4 1.500.5 3zM15 14l2 3-2 2-2-2z" fill="#fb542b"/></svg></div>
  </div>
  <div class="tray">
    <svg viewBox="0 0 24 24"><path d="M6 15.500l6-6.500 6 6.500" fill="none" stroke="#fff" stroke-width="1.800"/></svg>
    <svg viewBox="0 0 24 24"><path d="M6 16a4.500 4.500 0 0 1 0-8 6.500 6.500 0 0 1 11-.5 5 5 0 0 1 4 3z" fill="#a9a9a9"/><path d="M5 19a3.500 3.500 0 0 1 0-6.500q6-3 8-.5l7-1a4 4 0 0 1 0 8z" fill="#fff"/></svg>
    <svg viewBox="0 0 24 24"><rect x="9" y="2" width="6" height="12" rx="3" fill="#4b9fc0" stroke="#7fd0ee"/><path d="M5.500 10q0 7 6.500 7t6.500-7M12 17v5" fill="none" stroke="#7fd0ee" stroke-width="1.500"/></svg>
    <svg viewBox="0 0 24 24"><g fill="none" stroke="#fff" stroke-width="1.700"><path d="M2.500 9q9.500-8.500 19 0M5.500 12.500q6.500-6 13 0M8.500 16q3.500-3.500 7 0"/></g><circle cx="12" cy="18.500" r="1.700" fill="#fff"/></svg>
    <svg viewBox="0 0 24 24"><path d="M2.500 9.500H6L11 5v14l-5-4.500H2.500z" fill="none" stroke="#fff" stroke-width="1.500"/><path d="M13.500 9q2 3 0 6" fill="none" stroke="#fff" stroke-width="1.400"/><path d="M16 6.500q4 5.500 0 11M18.500 4.500q5.500 7.500 0 15" fill="none" stroke="#777" stroke-width="1.400"/></svg>
    <svg viewBox="0 0 24 24"><path d="M9 7h9q2.500 0 2.500 2.500v6q0 2.500-2.500 2.500H5q-2.500 0-2.500-2.500V12M20.500 11h1.500v3h-1.500" fill="none" stroke="#fff" stroke-width="1.600"/><path d="M7 2L3 9h3l-1 5 5-7H6.500z" fill="#fff"/></svg>
    <div class="clock">4:37 PM<br>5/1/2024</div>
    <svg viewBox="0 0 24 24"><path d="M12 3q6 0 6 7v4l2 4H4l2-4v-4q0-7 6-7zM9.500 19q2.500 3.500 5 0" fill="none" stroke="#fff" stroke-width="1.500"/></svg>
    <svg class="pre" viewBox="0 0 30 30"><path d="M9 1h9q-2 1-3 5l-3 12q-1 3-4 3H4q-4-1-3-6L4 5q1-4 5-4z" fill="url(#gPre)"/><path d="M22 25H12l5-13q1-4 4-4h4q5 1 3 6l-2 7q-1 4-4 4z" fill="url(#gPre2)"/><rect x="7" y="20" width="22" height="10" rx="2" fill="#fdc500"/><text x="9.500" y="28.200" font-family="Open Sans" font-weight="800" font-size="8.500" fill="#222" textLength="17">PRE</text></svg>
  </div>
</footer>
</div>
</body>
</html>
```
FILE: styles.css
```css
* { box-sizing: border-box; margin: 0; padding: 0; }
body { background: #2d1e15; font-family: "Open Sans", "Noto Sans", sans-serif; color: #fff; overflow: hidden; }
.defs { position: absolute; }
.desktop { width: 1920px; height: 1080px; display: grid; grid-template: 1020px 60px / 960px 960px; }
svg { display: block; overflow: visible; }
.ic { width: 24px; height: 24px; flex: none; }
.bar { width: 1px; height: 20px; background: #777; flex: none; }

.win { position: relative; border: 1px solid #767676; background: #3b3b3b; display: flex; flex-direction: column; overflow: hidden; }
.tabs { height: 50px; background: #2e2e2e; display: grid; grid-template-columns: 52px 53px 46px 314px 1fr 140px; padding-left: 13px; align-items: start; }
.active .tabs { background: #202020; grid-template-columns: 52px 53px 46px 1fr 140px; }
.tabs > .av { width: 30px; height: 30px; margin-top: 15px; }
.tabs > .ic { margin-top: 18px; color: #fff; }
.tabs > .dim { color: #a5a5a5; }
.tabs .plus { color: #eee; margin-top: 18px; }
.tabs > .plus { color: #bbb; }
.tab { height: 39px; margin-top: 11px; background: #3b3b3b; border-radius: 10px 10px 0 0; display: flex; align-items: center; font-size: 14.300px; color: #b9b9b9; }
.inactive .tab { width: 300px; padding-left: 14px; color: #b9b9b9; }
.inactive .tab span { width: 206px; margin-left: 13px; white-space: nowrap; margin-top: -2px; }
.inactive .tab .ic { margin-left: 16px; }
.pdf { width: 19px; height: 21px; flex: none; }
.ctl { display: grid; grid-template-columns: 58px 58px 24px; padding-top: 8px; color: #8a8a8a; margin-left: -15px; }
.active .ctl { color: #fff; }
.strip { display: flex; height: 50px; }
.mt { width: 58.600px; height: 50px; display: flex; align-items: center; padding: 11px 0 0 8px; position: relative; font-size: 14.500px; flex: none; }
.mt::before { content: ""; position: absolute; left: 0; top: 18px; width: 1px; height: 26px; background: #666; }
.mt span { margin: -2px 0 0 13px; width: 17px; overflow: hidden; -webkit-mask-image: linear-gradient(90deg, #000 50%, transparent 110%); }
.dimtab .pdf { opacity: .55; }
.active .tab { width: 58px; flex: none; padding-left: 9px; color: #e6e6e6; font-size: 14.500px; }
.active .tab span { width: 15px; margin-top: -2px; overflow: hidden; -webkit-mask-image: linear-gradient(90deg, #000 40%, transparent 100%); }
.active .tab .ic { margin-left: 3px; color: #fff; }
.mt.end::before { left: 57px; }
.strip .plus { margin: 18px 0 0 13px; }

.addr { height: 47px; display: grid; grid-template-columns: 55px 47px 521.500px 55.500px 55px 55px 54.500px 49px 30px; padding-left: 23px; align-items: center; }
.pill { width: 498px; height: 37px; border-radius: 19px; background: #2b2b2b; display: grid; grid-template-columns: 33px 40px 17px 270px 25.500px 50px 24px; padding-left: 20px; align-items: center; margin-bottom: 2px; font-size: 16px; white-space: nowrap; }
.pill .bar { width: 2px; }
.url { font-size: 16px; letter-spacing: 0.28px; }
.pill b { width: 50px; height: 32px; }
.pill b.on { background: #5e5e5e; border-radius: 16px; display: grid; place-items: center; margin-left: -36px; }
.star { color: #999; fill: none; }
.active .star { color: #4a9add; fill: #4a9add; }
.active .addr { --heart: #eee; --pulse: #333; }
.cop { width: 30px; height: 28px; }

.findbar { position: absolute; left: 164px; top: 91px; width: 460px; height: 52px; background: #4d4d4d; border: 1px solid #5a5a5a; border-radius: 9px; box-shadow: 0 3px 8px #0006; display: grid; grid-template-columns: 263px 42px 18px 40px 40px 24px; padding-left: 11px; align-items: center; font-size: 14.300px; z-index: 2; }
.findbar .cnt { color: #aaa; font-size: 15px; }
.findbar .bar { height: 30px; background: #5f5f5f; }

.body { flex: 1; display: flex; }
.viewer { margin-left: 5px; width: 899px; height: 916px; border-radius: 9px; overflow: hidden; display: flex; background: #2b2b2b; }
.main { width: 880px; display: flex; flex-direction: column; }
.tools { height: 52px; background: #3b3b3b; border-bottom: 1px solid #575757; box-shadow: inset 0 1px #333; display: grid; grid-template-columns: 39.500px 14px 33px 44px 124.500px 44.500px 45.500px 40px 8px 63px 40px 17px 39.500px 16px 144px 50px 17px 44.500px 24px; padding-left: 15.500px; align-items: center; font-size: 15px; }
.tools .pageno { width: 50px; height: 40px; border: 1px solid #757575; background: #4a4a4a; border-radius: 2px; display: grid; place-items: center; font-size: 14px; }
.sbtn { width: 45px; height: 40px; background: #4e4e4e; border-radius: 2px; display: grid; place-items: center; }
.tools .edge { width: 1px; height: 9px; background: #eee; justify-self: start; margin-left: -6.500px; margin-top: 4px; }
.doc { flex: 1; overflow: hidden; background: #2b2b2b; }
.hscroll { height: 16px; display: flex; align-items: center; padding: 2px 0 0 10px; }
.hscroll .thumb { width: 703px; height: 11px; border-radius: 6px; background: #9f9f9f; margin: 0 129px 0 10px; }
.active .thumb { width: 814px; margin-right: 18px; }
.al, .ar { border: 6px solid transparent; flex: none; }
.al { border-right: 9px solid #9f9f9f; border-left: 0; }
.ar { border-left: 9px solid #9f9f9f; border-right: 0; }
.vscroll { width: 19px; position: relative; display: flex; flex-direction: column; justify-content: space-between; align-items: center; padding: 11px 0 25px; }
.au, .ad { border: 6px solid transparent; }
.au { border-bottom: 9px solid #9f9f9f; border-top: 0; }
.ad { border-top: 9px solid #9f9f9f; border-bottom: 0; }
.mk { position: absolute; left: 0; width: 19px; height: 3px; background: #ffc400; border: 1px solid #b05c00; border-width: 1px 0; }
.vt { position: absolute; left: 4px; width: 11px; border-radius: 6px; background: #9f9f9f; }
.side { width: 54px; display: flex; flex-direction: column; align-items: center; padding-top: 16px; }
.side svg { width: 22px; height: 22px; margin-bottom: 28.100px; flex: none; }
.side svg:first-child { margin-bottom: 30px; }
.side hr { width: 34px; border: 0; border-top: 1px solid #6b6b6b; }
.side .sp { width: 24px; height: 24px; margin: 28px 0 0; color: #bbb; }
.side .last { margin-top: auto; }
.side .gear { margin: 16px 0 15px; }

.page1 { margin-left: 7px; width: 873px; height: 841px; background: #fff; color: #000; padding-left: 59px; display: grid; grid-template-columns: 358px 456px; grid-template-rows: 290px 357px; font-family: "Liberation Serif", serif; overflow: hidden; }
.cell { border: solid #000; border-width: 0 0 1px 1px; overflow: hidden; }
.cell p { font-size: 19.500px; letter-spacing: 0.600px; line-height: 22.900px; padding: 0 0 0 8px; width: 349px; white-space: nowrap; }
.cell p span { display: block; }
.cell.c-top p { margin-top: -9px; }
.vc { font: italic bold 16px "Open Sans"; line-height: 0; }
.vc small { font-size: 12px; }
.j { text-align-last: justify; white-space: nowrap; display: block; }
.cell mark { background: #ff0; color: #000; }
.fig { font-family: "Liberation Serif", "DejaVu Serif", serif; }
.cap { font-size: 14.500px; font-style: italic; fill: #44546a; }

.prev { margin-left: 6px; height: 4px; background: linear-gradient(90deg, #fff 84px, #d0d8ed 84px); }
.page2 { margin: 16px 0 0 6px; width: 874px; height: 828px; background: linear-gradient(90deg, #fff 796px, #d0d8ed 796px); color: #111; display: grid; grid-template-columns: 428px 368px; font-family: "Liberation Serif", serif; font-size: 13px; line-height: 16.100px; overflow: hidden; }
.txt { padding: 53px 3px 0 0; }
.txt p { letter-spacing: 0.140px; }
.mark { margin: 0 0 29.300px 90px; }
.q, .a { display: grid; white-space: nowrap; }
.q { grid-template-columns: 114px 1fr; column-gap: 7px; }
.q > b { text-align: right; }
.a { grid-template-columns: 17.400px 1fr; padding-left: 121px; }
.q p > span, .a p > span { display: block; }
.g4 { margin-top: 4px; }
.g5 { margin-top: 5px; }
sub { font-size: 9px; font-style: italic; line-height: 0; vertical-align: -2.500px; }
.txt mark { background: #98c000; color: #111; }
.txt h3 { font: bold 12.800px/16.200px "Liberation Sans", sans-serif; margin: 185.500px 0 4.500px 91px; white-space: nowrap; letter-spacing: 0.180px; }
.txt h3 em { font-style: normal; letter-spacing: -0.060px; }
.txt h3 span, .ph b, .fc b { color: #0e4a9e; }
.txt h3 span { margin-right: 8px; letter-spacing: 0; }
.figs { display: flex; flex-direction: column; }
.ph { font: 14px/20px "Liberation Sans", sans-serif; padding: 64px 0 0 228px; height: 100px; color: #444; white-space: nowrap; letter-spacing: -0.350px; }
.ph span { letter-spacing: 1.500px; color: #aaa; margin: 0 5px 0 1px; }
.fc { width: 363px; text-align: center; padding-top: 4px; height: 60px; }
.fc b { display: block; font: bold 13px/16px "Liberation Sans", sans-serif; }
.fc i { display: block; font-size: 13.200px; line-height: 16px; }
.f2 { padding-top: 3px; }
.fig.last { margin-top: 95px; }
.f3 { width: 373px; padding-top: 8px; }
.f3 b { line-height: 17px; }

.taskbar { grid-column: 1 / 3; height: 60px; display: flex; align-items: center; background: linear-gradient(90deg, #2c1e17 0, #2c1d16 280px, #3c1d13 420px, #2f1e16 520px, #2c1f18 700px, #39201a 770px, #2a201c 860px, #26201d 1200px, #251f1c 1300px, #301f15 1460px, #301e14 1920px); }
.weather { width: 194px; padding: 0 0 8px 25px; }
.start { margin-right: 16px; }
.search { width: 274px; height: 40px; border-radius: 20px; background: #4a3b34; border: 1px solid #5c4e47; display: grid; grid-template-columns: 32px 163px 58px; padding-left: 13px; align-items: center; font-size: 17.500px; color: #e0dcda; }
.search span { letter-spacing: -0.800px; }
.tv { margin: 0 16px; }
.edge-btn { width: 48px; height: 50px; border: 1px solid #4d3e36; border-radius: 5px; background: #3c2e27; display: grid; place-items: center; position: relative; }
.edge-btn::after, .app::after { content: ""; position: absolute; bottom: 1px; width: 20px; height: 4px; border-radius: 2px; background: #4cc2ff; }
.apps { display: flex; margin-left: 3px; }
.app { width: 55.060px; height: 50px; display: grid; place-items: center; position: relative; }
.app svg { width: 30px; height: 30px; }
.app::after { width: 8px; background: #9a9490; }
.app.off::after { display: none; }
.bd { position: absolute; left: 28px; top: 4px; width: 20px; height: 20px; border-radius: 10px; font: 12.500px/20px "Open Sans"; text-align: center; }
.red { background: #c42b1c; }
.blue { background: #4cc2ff; color: #000; }
.coral { background: #f0545a; }
.tray { display: grid; grid-template-columns: 40px 40px 40px 30px 30px 24px 79px 43px 30px; align-items: center; margin-left: 78px; }
.tray svg { width: 24px; height: 24px; }
.tray .clock { font-size: 14.500px; line-height: 19.500px; text-align: right; letter-spacing: -0.400px; white-space: nowrap; }
.tray .clock + svg { margin-left: 7px; }
.tray .pre { width: 30px; height: 30px; margin-left: 8px; }
```
